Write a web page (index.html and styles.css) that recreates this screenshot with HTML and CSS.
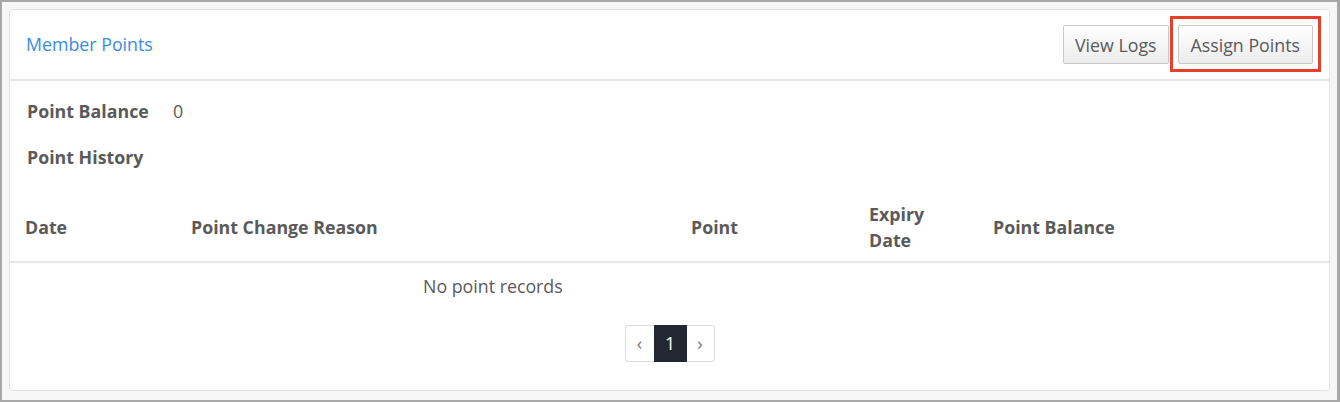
FILE: index.html
```html
<!DOCTYPE html>
<html>
<head>
<meta charset="utf-8">
<title>Member Points</title>
<link rel="stylesheet" href="styles.css">
</head>
<body>
    <div class="frame">
        <!-- 积分卡片 begin -->
        <div class="card">
            <div class="card-hd">
                <a href="javascript:;" class="title">Member Points</a>
                <div class="btns">
                    <button class="btn">View Logs</button>
                    <button class="btn marked">Assign Points</button>
                </div>
            </div>
            <div class="card-bd">
                <div class="field">
                    <span class="label">Point Balance</span>
                    <span class="value">0</span>
                </div>
                <div class="field">
                    <span class="label">Point History</span>
                </div>
                <table class="list">
                    <thead>
                        <tr>
                            <th class="c-date">Date</th>
                            <th class="c-reason">Point Change Reason</th>
                            <th class="c-point">Point</th>
                            <th class="c-expiry">Expiry<br>Date</th>
                            <th>Point Balance</th>
                        </tr>
                    </thead>
                    <tbody>
                        <tr>
                            <td colspan="5" class="empty">No point records</td>
                        </tr>
                    </tbody>
                </table>
                <div class="pager">
                    <a href="javascript:;" class="prev">&lsaquo;</a>
                    <a href="javascript:;" class="num active">1</a>
                    <a href="javascript:;" class="next">&rsaquo;</a>
                </div>
            </div>
        </div>
        <!-- 积分卡片 end -->
    </div>
</body>
</html>
```

FILE: styles.css
```css
* { margin: 0; padding: 0; box-sizing: border-box; }
body { font-family: "Open Sans", "Liberation Sans", sans-serif; font-size: 17.8px; color: #5a5a5a; }
a { text-decoration: none; }

.frame { width: 1340px; height: 402px; border: 2px solid #a8a8a8; border-right-width: 3px; background-color: #f6f6f6; padding: 7px 7px 9px 7px; }
.card { background-color: #fff; border: 1px solid #e3e3e3; border-radius: 4px; height: 382px; }

/*头部*/
.card-hd { display: flex; align-items: center; justify-content: space-between; height: 71px; padding: 0 16px; border-bottom: 2px solid #e8e8e8; }
.card-hd .title { color: #3a8ddd; margin-top: -2px; }
.btns { display: flex; gap: 9px; }
.btn { position: relative; height: 39px; padding: 0 11px; font-family: inherit; font-size: 17.8px; color: #5a5a5a; border: 1px solid #c8c8c8; border-radius: 2px; background: linear-gradient(#fff, #ececec); cursor: pointer; }
.btn.marked { padding: 0 12px; }
/*红色标注框*/
.btn.marked::after { content: ""; position: absolute; top: -10px; bottom: -9px; left: -9px; right: -9px; border: 3px solid #e6402a; }

/*内容*/
.card-bd { padding-top: 10px; }
.field { display: flex; align-items: center; height: 46px; padding-left: 17px; padding-bottom: 6px; }
.field .label { width: 146px; font-weight: bold; }

.list { width: 100%; border-collapse: collapse; margin-top: 10px; }
.list th { text-align: left; font-weight: bold; line-height: 26px; padding: 8px 0 8px 15px; border-bottom: 2px solid #e8e8e8; vertical-align: middle; }
.list th.c-date { width: 166px; }
.list th.c-reason { width: 500px; }
.list th.c-point { width: 178px; }
.list th.c-expiry { width: 124px; }
.list td.empty { padding: 11px 0 0 413px; line-height: 24px; }

.pager { display: flex; justify-content: center; margin-top: 27px; }
.pager a { display: block; height: 37px; line-height: 35px; text-align: center; color: #777; border: 1px solid #ddd; font-size: 18px; }
.pager .prev { width: 29px; border-radius: 3px 0 0 3px; border-right: none; }
.pager .next { width: 28px; border-radius: 0 3px 3px 0; border-left: none; }
.pager .num { width: 33px; font-size: 17.8px; }
.pager .num.active { background-color: #222831; border-color: #222831; color: #fff; }
```
